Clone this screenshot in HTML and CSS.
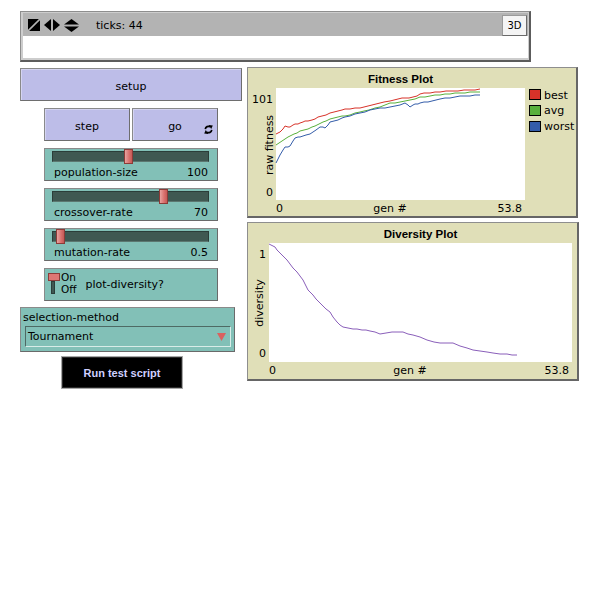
FILE: index.html
```html
<!DOCTYPE html>
<html>
<head>
<meta charset="utf-8">
<link rel="stylesheet" href="styles.css">
</head>
<body>
<div class="page">
  <div class="view">
    <div class="view-bar">
      <div class="view-icons">
        <svg class="ic-sq" width="12" height="12" viewBox="0 0 12 12"><rect width="12" height="12" fill="#000"/><line x1="0" y1="12" x2="12" y2="0" stroke="#b3b3b3" stroke-width="1.6"/></svg>
        <svg class="ic-lr" width="16" height="12" viewBox="0 0 16 12"><polygon points="7,0 7,12 0,6" fill="#000"/><polygon points="9,0 9,12 16,6" fill="#000"/></svg>
        <svg class="ic-ud" width="15" height="13" viewBox="0 0 15 13"><polygon points="0,5.5 15,5.5 7.5,0" fill="#000"/><polygon points="0,7.5 15,7.5 7.5,13" fill="#000"/></svg>
      </div>
      <span class="ticks">ticks: 44</span>
      <span class="btn3d">3D</span>
    </div>
    <div class="view-white"></div>
  </div>

  <div class="main">
    <div class="controls">
      <div class="button setup">setup</div>
      <div class="btn-row">
        <div class="button half">step</div>
        <div class="button half go">go
          <svg class="forever" width="9" height="9" viewBox="0 0 9 9"><path d="M1.3 4.2 A3.2 3.2 0 0 1 6.2 1.8" stroke="#000" stroke-width="1.7" fill="none"/><polygon points="4.6,0 8.8,0.6 7.2,4" fill="#000"/><path d="M7.7 4.8 A3.2 3.2 0 0 1 2.8 7.2" stroke="#000" stroke-width="1.7" fill="none"/><polygon points="4.4,9 0.2,8.4 1.8,5" fill="#000"/></svg>
        </div>
      </div>

      <div class="slider">
        <div class="track"><div class="handle" style="left:71px"></div></div>
        <div class="slider-label"><span>population-size</span><span>100</span></div>
      </div>
      <div class="slider">
        <div class="track"><div class="handle" style="left:106px"></div></div>
        <div class="slider-label"><span>crossover-rate</span><span>70</span></div>
      </div>
      <div class="slider">
        <div class="track"><div class="handle" style="left:3px"></div></div>
        <div class="slider-label"><span>mutation-rate</span><span>0.5</span></div>
      </div>

      <div class="switch">
        <div class="switch-gfx"><div class="sw-handle"></div><div class="sw-bar"></div></div>
        <div class="onoff"><span class="on">On</span><span class="off">Off</span></div>
        <span class="switch-label">plot-diversity?</span>
      </div>

      <div class="chooser">
        <div class="chooser-label">selection-method</div>
        <div class="chooser-box">
          <span>Tournament</span>
          <svg width="9" height="8" viewBox="0 0 9 8"><polygon points="0,0 9,0 4.5,8" fill="#d9615f"/></svg>
        </div>
      </div>

      <div class="run">Run test script</div>
    </div>

    <div class="plots">
      <div class="plot fitness">
        <div class="plot-title">Fitness Plot</div>
        <svg class="plot-svg" width="328" height="128" viewBox="0 0 328 128">
          <rect x="28" y="0" width="249" height="112" fill="#fff"/>
          <text x="25" y="15" text-anchor="end">101</text>
          <text x="25" y="108" text-anchor="end">0</text>
          <text transform="translate(25,57) rotate(-90)" text-anchor="middle">raw fitness</text>
          <text x="28" y="124">0</text>
          <text x="142" y="124" text-anchor="middle">gen #</text>
          <text x="274" y="124" text-anchor="end">53.8</text>
          <polyline fill="none" stroke="#d73229" stroke-width="1" points="28,46 32,44 35,41 37,38 40,39 42,39 45,37 47,36 50,36 52,35 55,34 57,33 60,33 64,32 67,31 70,29 74,28 78,27 82,25 86,24 90,23 94,22 97,21 102,21 107,20 112,20 116,19 120,18 124,17 128,16 132,15 136,14 142,13 146,12 150,11 154,10 157,10 161,10 165,9 169,8 172,6 176,5 182,5 187,4 192,4 198,3 204,3 210,3 216,2 222,2 227,2 232,1"/>
          <polyline fill="none" stroke="#59b03c" stroke-width="1" points="28,57 31,55 34,53 37,51 40,49 42,48 46,46 49,45 52,43 56,42 60,41 64,39 67,38 71,36 75,34 78,33 82,31 86,30 90,29 94,28 97,28 102,27 107,25 112,24 116,23 121,22 127,20 132,19 137,17 142,15 147,15 152,14 157,13 162,12 167,11 172,9 177,9 182,8 187,7 192,7 197,6 202,6 207,5 212,5 217,5 222,4 227,4 232,4"/>
          <polyline fill="none" stroke="#345da9" stroke-width="1" points="28,75 30,71 32,67 35,62 37,59 40,59 42,58 45,53 47,50 50,49 52,49 55,48 58,47 62,46 65,44 68,42 72,39 75,39 77,40 80,37 82,34 86,33 90,32 94,30 97,29 102,28 107,26 112,25 117,24 122,22 127,21 132,20 137,20 142,19 147,18 152,17 157,15 160,17 162,19 165,17 167,16 170,16 172,15 176,14 180,14 184,13 188,12 192,11 197,10 202,10 207,9 212,8 217,8 222,8 227,7 232,7"/>
          <rect x="281.5" y="1.5" width="11" height="10" fill="#d73229" stroke="#000"/>
          <rect x="281.5" y="17.5" width="11" height="10" fill="#59b03c" stroke="#000"/>
          <rect x="281.5" y="33.5" width="11" height="10" fill="#345da9" stroke="#000"/>
          <text x="296" y="11">best</text>
          <text x="296" y="26">avg</text>
          <text x="296" y="42">worst</text>
        </svg>
      </div>

      <div class="plot diversity">
        <div class="plot-title">Diversity Plot</div>
        <svg class="plot-svg" width="329" height="136" viewBox="0 0 329 136">
          <rect x="21" y="0" width="303" height="119" fill="#fff"/>
          <text x="18" y="15" text-anchor="end">1</text>
          <text x="18" y="114" text-anchor="end">0</text>
          <text transform="translate(15,60) rotate(-90)" text-anchor="middle">diversity</text>
          <text x="21" y="131">0</text>
          <text x="162" y="131" text-anchor="middle">gen #</text>
          <text x="321" y="131" text-anchor="end">53.8</text>
          <polyline fill="none" stroke="#8a5fba" stroke-width="1" points="21,1 25,3 27,4 29,7 32,10 35,13 39,17 42,21 45,25 49,29 52,33 55,37 58,43 60,47 63,50 65,52 68,56 71,59 74,62 78,66 82,69 85,74 89,79 92,82 95,84 100,85 105,86 109,86 114,87 118,87 122,88 127,89 132,91 138,90 144,89 150,89 155,89 160,91 165,92 172,94 179,97 186,99 192,100 199,100 205,100 212,103 219,105 225,107 232,108 239,109 245,110 252,111 259,111 264,112 269,112"/>
        </svg>
      </div>
    </div>
  </div>
</div>
</body>
</html>
```

FILE: styles.css
```css
* { box-sizing: border-box; }

body {
  margin: 0;
  background: #fff;
  color: #000;
  font-family: "DejaVu Sans", sans-serif;
  font-size: 11px;
}

.page {
  padding: 11px 0 0 20px;
}

/* ---------- world view ---------- */
.view {
  width: 511px;
  height: 51px;
  border: 1px solid #8e8e8e;
  border-right: 2px solid #5c5c5c;
  border-bottom: 2px solid #5c5c5c;
  padding: 1px 1px 2px 2px;
  background: #cdcdcd;
  display: flex;
  flex-direction: column;
}

.view-bar {
  height: 23px;
  background: #b3b3b3;
  display: flex;
  align-items: center;
  padding-left: 5px;
}

.view-icons {
  display: flex;
  align-items: center;
  gap: 4px;
  margin-top: 1px;
}

.ticks {
  margin-left: 17px;
  margin-top: 1px;
}

.btn3d {
  margin-left: auto;
  margin-right: 1px;
  margin-top: 1px;
  width: 25px;
  height: 21px;
  background: #f4f4f4;
  border: 1px solid #9a9a9a;
  border-right-color: #6a6a6a;
  border-bottom-color: #6a6a6a;
  font-size: 10px;
  display: flex;
  align-items: center;
  justify-content: center;
}

.view-white {
  flex: 1;
  background: #fff;
}

/* ---------- layout ---------- */
.main {
  display: flex;
  margin-top: 5px;
  gap: 5px;
}

.controls {
  width: 222px;
  padding-top: 1px;
  display: flex;
  flex-direction: column;
}

/* ---------- buttons ---------- */
.button {
  height: 33px;
  padding-top: 4px;
  background: #bdbde8;
  border: 1px solid #8a8a8a;
  border-right-color: #6e6e6e;
  border-bottom-color: #6e6e6e;
  box-shadow: inset 1px 1px 0 #d4d4f2;
  display: flex;
  align-items: center;
  justify-content: center;
}

.setup {
  width: 222px;
}

.btn-row {
  display: flex;
  gap: 2px;
  margin: 7px 0 0 24px;
}

.half {
  width: 86px;
}

.go {
  position: relative;
}

.forever {
  position: absolute;
  right: 4px;
  bottom: 6px;
}

/* ---------- sliders ---------- */
.slider {
  width: 174px;
  height: 33px;
  margin: 7px 0 0 24px;
  background: #82c0b7;
  border: 1px solid #8a8a8a;
  border-right-color: #6a6a6a;
  border-bottom-color: #6a6a6a;
  padding: 2px 8px 0 7px;
}

.track {
  position: relative;
  height: 11px;
  background: #3f5852;
  border: 1px solid #2b3d39;
  border-bottom-color: #5c7770;
}

.handle {
  position: absolute;
  top: -3px;
  width: 9px;
  height: 15px;
  background: linear-gradient(to right, #e7a3a0, #d9706d 60%, #c45a57);
  border: 1px solid #8c3b38;
}

.slider-label {
  display: flex;
  justify-content: space-between;
  margin-top: 4px;
  padding: 0 1px 0 2px;
  line-height: 14px;
}

/* ---------- switch ---------- */
.switch {
  width: 174px;
  height: 33px;
  margin: 7px 0 0 24px;
  background: #82c0b7;
  border: 1px solid #8a8a8a;
  border-right-color: #6a6a6a;
  border-bottom-color: #6a6a6a;
  padding: 4px 0 0 3px;
  display: flex;
  align-items: flex-start;
}

.switch-gfx {
  display: flex;
  flex-direction: column;
  width: 13px;
}

.sw-handle {
  width: 12px;
  height: 8px;
  background: #dd7774;
  border: 1px solid #8c3b38;
}

.sw-bar {
  width: 4px;
  height: 13px;
  margin-left: 3px;
  background: #3f5852;
  border: 1px solid #2b3d39;
}

.onoff {
  display: flex;
  flex-direction: column;
  margin-top: -2px;
  font-size: 10.5px;
}

.onoff span {
  display: block;
  height: 12px;
  line-height: 12px;
}

.switch-label {
  margin: 5px 0 0 9px;
}

/* ---------- chooser ---------- */
.chooser {
  width: 215px;
  height: 45px;
  margin-top: 6px;
  background: #82c0b7;
  border: 1px solid #8a8a8a;
  border-right-color: #6a6a6a;
  border-bottom-color: #6a6a6a;
  padding: 2px 3px 0 2px;
}

.chooser-label {
  line-height: 15px;
}

.chooser-box {
  width: 206px;
  height: 21px;
  margin: 1px 0 0 2px;
  border: 1px solid #4e6a64;
  border-right-color: #d8ece8;
  border-bottom-color: #d8ece8;
  display: flex;
  align-items: center;
  justify-content: space-between;
  padding: 0 4px 0 2px;
}

/* ---------- run button ---------- */
.run {
  width: 122px;
  height: 33px;
  margin: 4px 0 0 41px;
  background: #000;
  border: 1px solid #a8a8a8;
  box-shadow: inset 0 0 0 1px #2a2a2a;
  color: #cfd0ff;
  font-family: "Liberation Sans", Arial, sans-serif;
  font-weight: bold;
  font-size: 11px;
  display: flex;
  align-items: center;
  justify-content: center;
}

/* ---------- plots ---------- */
.plots {
  display: flex;
  flex-direction: column;
  gap: 4px;
}

.plot {
  background: #e0dfb8;
  border: 1px solid #8e8e8e;
  border-right: 2px solid #666;
  border-bottom: 2px solid #666;
  display: flex;
  flex-direction: column;
}

.fitness {
  width: 331px;
  height: 151px;
}

.diversity {
  width: 332px;
  height: 159px;
}

.plot-title {
  height: 20px;
  line-height: 23px;
  text-align: center;
  font-family: "Liberation Sans", Arial, sans-serif;
  font-weight: bold;
  font-size: 11.5px;
}

.fitness .plot-title {
  margin-left: 28px;
  width: 249px;
}

.diversity .plot-title {
  margin-left: 21px;
  width: 303px;
}

.plot-svg {
  display: block;
  font-family: "DejaVu Sans", sans-serif;
  font-size: 11px;
}
```
